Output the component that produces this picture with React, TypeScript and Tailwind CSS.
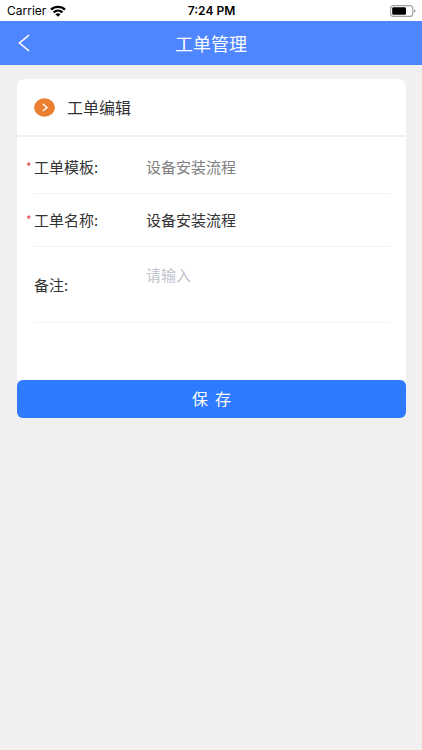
import { useState } from 'react';

function WifiIcon() {
  return (
    <svg viewBox="0 0 16 12" className="w-4 h-3" aria-hidden="true">
      <path d="M1 4.6C4.8 0.9 11.2 0.9 15 4.6" fill="none" stroke="#000" strokeWidth="2.4" />
      <path d="M3.6 7.4C6.2 5 9.8 5 12.4 7.4" fill="none" stroke="#000" strokeWidth="2.2" />
      <path d="M8 11.8L5.4 9.3C7 8 9 8 10.6 9.3Z" fill="#000" />
    </svg>
  );
}

function BatteryIcon() {
  return (
    <svg viewBox="0 0 26 12" className="w-[26px] h-3" aria-hidden="true">
      <rect x="0.6" y="0.6" width="22.2" height="10.8" rx="3" fill="none" stroke="#a0a0a0" strokeWidth="1.1" />
      <rect x="2.2" y="2.2" width="13.8" height="7.6" rx="1.4" fill="#000" />
      <path d="M24.2 4.2C25.7 4.8 25.7 7.2 24.2 7.8Z" fill="#707070" />
    </svg>
  );
}

function StatusBar() {
  return (
    <div className="grid grid-cols-3 items-center h-[21px] pl-[7px] pr-[6px] bg-white text-black text-xs font-['Inter',sans-serif]">
      <div className="flex items-center gap-1">
        <span>Carrier</span>
        <WifiIcon />
      </div>
      <span className="text-center font-semibold">7:24 PM</span>
      <div className="flex justify-end">
        <BatteryIcon />
      </div>
    </div>
  );
}

function Label({ id, text, required }: { id: string; text: string; required?: boolean }) {
  return (
    <label htmlFor={id} className="flex items-center w-[120px] shrink-0 text-[#333]">
      <span className="w-2 shrink-0 text-xs leading-4 text-[#e0454b]">{required ? '*' : ''}</span>
      {text}
    </label>
  );
}

export default function App() {
  const [name, setName] = useState('设备安装流程');
  const [remark, setRemark] = useState('');

  return (
    <div className="min-h-screen bg-[#f0f0f0] font-['Noto_Sans_CJK_SC',sans-serif]">
      <StatusBar />

      <header className="grid grid-cols-[48px_1fr_48px] items-center h-11 bg-[#4e86ff] text-white">
        <button type="button" aria-label="返回" className="flex justify-center">
          <svg viewBox="0 0 12 18" className="w-3 h-[18px]" fill="none" stroke="currentColor" strokeWidth="1.5">
            <path d="M11 1.2L1.4 9L11 16.8" />
          </svg>
        </button>
        <h1 className="text-center text-lg leading-6">工单管理</h1>
      </header>

      <form className="pl-[17px] pr-4 pt-[14px]" onSubmit={(e) => e.preventDefault()}>
        <div className="rounded-t-lg bg-white pb-[57px]">
          <div className="flex items-center gap-3 h-[58px] px-[17px] border-b-2 border-[#efefef]">
            <svg viewBox="0 0 21 19" className="w-[21px] h-[19px]" aria-hidden="true">
              <ellipse cx="10.5" cy="9.5" rx="10.4" ry="9.2" fill="#eb7f31" />
              <path d="M8.8 6L13 9.5L8.8 13" fill="none" stroke="#fff" strokeWidth="1.5" />
            </svg>
            <h2 className="text-base leading-6 text-[#333]">工单编辑</h2>
          </div>

          <div className="pl-[9px] pr-4 text-[15px] leading-6">
            <div className="flex items-center h-14 pt-1">
              <Label id="template" text="工单模板:" required />
              <input id="template" value="设备安装流程" readOnly className="flex-1 min-w-0 text-[#808080] outline-none" />
            </div>
            <div className="ml-2 border-t border-[#f0f0f0]" />
            <div className="flex items-center h-[52px]">
              <Label id="name" text="工单名称:" required />
              <input
                id="name"
                value={name}
                onChange={(e) => setName(e.target.value)}
                className="flex-1 min-w-0 text-[#333] outline-none"
              />
            </div>
            <div className="ml-2 border-t border-[#f0f0f0]" />
            <div className="flex items-center h-[75px]">
              <Label id="remark" text="备注:" />
              <textarea
                id="remark"
                value={remark}
                onChange={(e) => setRemark(e.target.value)}
                placeholder="请输入"
                className="flex-1 min-w-0 h-11 resize-none text-[#333] placeholder:text-[#c0c4cc] outline-none"
              />
            </div>
            <div className="ml-2 border-t border-[#f4f4f4]" />
          </div>
        </div>

        <button
          type="submit"
          className="w-full h-[38px] pb-[2px] rounded-md bg-[#2e7bff] text-base leading-6 text-white whitespace-pre"
        >
          {'保  存'}
        </button>
      </form>
    </div>
  );
}
